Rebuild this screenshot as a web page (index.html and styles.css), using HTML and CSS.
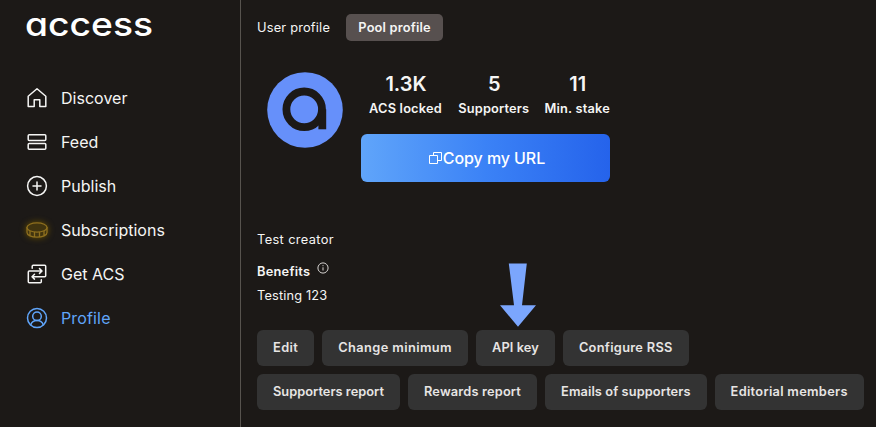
FILE: index.html
```html
<!DOCTYPE html>
<html lang="en">
<head>
<meta charset="utf-8">
<title>access – Profile</title>
<link rel="stylesheet" href="styles.css">
</head>
<body>
<div class="app">
  <aside class="sidebar">
    <svg class="logo" width="130" height="32" viewBox="0 0 130 32"><text x="0" y="25.500" textLength="128" lengthAdjust="spacingAndGlyphs">access</text></svg>
    <nav class="nav">
      <a class="nav-item"><svg class="icon" viewBox="0 0 24 24"><path d="M3.200 20.500V10.200L12 2.700l8.800 7.500v10.300h-6v-6.700H9.200v6.700z"/></svg>Discover</a>
      <a class="nav-item"><svg class="icon" viewBox="0 0 24 24"><rect x="3.200" y="4.700" width="17.600" height="5.800" rx="1"/><rect x="3.200" y="13.500" width="17.600" height="5.800" rx="1"/></svg>Feed</a>
      <a class="nav-item"><svg class="icon" viewBox="0 0 24 24"><circle cx="12" cy="12" r="9.400"/><path d="M12 8v8M8 12h8"/></svg>Publish</a>
      <a class="nav-item"><svg class="icon coin" viewBox="0 0 24 24"><path d="M2 9.500v5c0 2.600 4.500 4.700 10 4.700s10-2.100 10-4.700v-5M9.500 14.300v4.700M14.500 14.300v4.700M5 13.200v4.200M19 13.200v4.200"/><ellipse cx="12" cy="9.500" rx="10" ry="4.600"/></svg>Subscriptions</a>
      <a class="nav-item"><svg class="icon" viewBox="0 0 24 24"><path d="M7.200 6.300v-2c0-.600.400-1 1-1h11.500c.600 0 1 .400 1 1v9.400c0 .600-.400 1-1 1H7.500M16.300 17.700v2c0 .600-.400 1-1 1H4.300c-.600 0-1-.400-1-1V10c0-.600.400-1 1-1h12.500M14.500 6.600L17 9l-2.500 2.400M9.500 12.300L7 14.700l2.500 2.400"/></svg>Get ACS</a>
      <a class="nav-item active"><svg class="icon" viewBox="0 0 24 24"><circle cx="12" cy="12" r="9.500"/><circle cx="12" cy="10.300" r="4.300"/><path d="M5.800 18.800c.800-2.700 3.300-4.200 6.200-4.200s5.400 1.500 6.200 4.200"/></svg>Profile</a>
    </nav>
  </aside>
  <main class="content">
    <div class="tabs"><span class="tab">User profile</span><span class="tab selected">Pool profile</span></div>
    <section class="profile">
      <svg class="avatar" width="76" height="76" viewBox="0 0 76 76"><circle class="disc" cx="38" cy="38" r="37.800"/><circle class="ring" cx="37.200" cy="37.300" r="17.800"/><path class="ring" d="M55.300 37.300V57.300"/></svg>
      <div class="summary">
        <div class="stats">
          <div class="stat"><b>1.3K</b><span>ACS locked</span></div>
          <div class="stat tight"><b>5</b><span>Supporters</span></div>
          <div class="stat"><b>11</b><span>Min. stake</span></div>
        </div>
        <button class="copy"><svg width="14" height="14" viewBox="0 0 14 14"><path d="M.500 4.500h8v8h-8zM4.500 4.500v-3h8v8h-4"/></svg>Copy my URL</button>
      </div>
    </section>
    <p class="bio">Test creator</p>
    <h2 class="benefits">Benefits <svg width="12" height="12" viewBox="0 0 12 12"><circle cx="6" cy="6" r="5.100"/><path d="M6 5.300v3.200M6 3.200v1"/></svg></h2>
    <p class="benefit">Testing 123</p>
    <div class="actions">
      <button class="loose">Edit</button><button class="loose">Change minimum</button>
      <button class="api">API key<svg class="arrow" width="36" height="64" viewBox="0 0 36 64"><path d="M8.800.500h18L22 42.300h14L18 63.800 0 42.300h14z"/></svg></button>
      <button class="rss">Configure RSS</button>
    </div>
    <div class="actions">
      <button class="snug">Supporters report</button><button>Rewards report</button><button class="api">Emails of supporters</button><button class="rss">Editorial members</button>
    </div>
  </main>
</div>
</body>
</html>
```
FILE: styles.css
```css
* { box-sizing: border-box; }
body { margin: 0; background: #1c1917; color: #f5f5f4; font: 12.8px/20px Inter, sans-serif; overflow: hidden; }
.app { display: flex; height: 427px; }
.sidebar { width: 241px; flex: none; border-right: 1px solid #57534e; padding: 10px 25px; }
.logo { display: block; overflow: visible; }
.logo text { font: 500 33px Inter, sans-serif; font-feature-settings: "cv11"; fill: #fff; }
.nav { margin-top: 34px; }
.nav-item { display: flex; align-items: center; gap: 12px; height: 44px; font-size: 16px; letter-spacing: .02px; }
.icon { width: 24px; height: 24px; fill: none; stroke: currentColor; stroke-width: 1.5; stroke-linejoin: round; stroke-linecap: round; overflow: visible; }
.nav-item .coin { color: #8f701f; fill: #41340f; filter: drop-shadow(0 0 3px #6b5200); stroke-width: 1.3; }
.active { color: #60a5fa; letter-spacing: .15px; }
.content { flex: 1; padding: 14px 0 0 16px; }
.tabs { display: flex; gap: 16px; letter-spacing: .2px; }
.tab { line-height: 27px; }
.selected { width: 97px; text-align: center; border-radius: 5px; background: #57504f; font-weight: 600; }
.profile { display: flex; gap: 18px; margin: 31px 0 0 10px; }
.avatar { flex: none; }
.disc { fill: #6690fa; }
.ring { fill: none; stroke: #1c1917; stroke-width: 7.8; }
.summary { width: 249px; }
.stats { display: flex; justify-content: space-between; height: 62px; padding-left: 8px; }
.stat { display: flex; flex-direction: column; align-items: center; font-weight: 600; letter-spacing: .2px; }
.tight { letter-spacing: .15px; padding-left: 1px; }
.stat b { font-size: 20px; font-weight: 600; line-height: 24px; letter-spacing: 0; padding-left: 1px; }
.stat span { line-height: 25px; }
button { border: 0; color: #e7e5e4; font: 600 12.8px/20px Inter, sans-serif; letter-spacing: .17px; }
.copy { display: flex; align-items: center; justify-content: center; gap: 0; width: 100%; height: 48px; padding: 0 0 0 3px; border-radius: 6px; background: linear-gradient(90deg, #60a5fa, #3b82f6 50%, #2563eb); color: #fff; font-size: 16px; font-weight: 500; letter-spacing: -.08px; }
.copy path { fill: none; stroke: currentColor; }
p, h2 { margin: 0; }
.bio { margin-top: 48px; letter-spacing: .38px; }
.benefits { display: flex; gap: 7px; margin-top: 12px; font-size: inherit; font-weight: 600; letter-spacing: .25px; }
.benefits svg { fill: none; stroke: #d6d3d1; }
.benefit { margin-top: 4px; letter-spacing: .15px; }
.actions { display: flex; gap: 8px; margin-top: 8px; }
.benefit + .actions { margin-top: 24px; }
.actions button { height: 36px; padding: 0 16px; border-radius: 6px; background: #333; white-space: nowrap; }
.actions .loose { letter-spacing: .4px; }
.actions .rss { letter-spacing: .3px; }
.actions .snug { letter-spacing: .03px; }
.actions .api { position: relative; letter-spacing: .1px; }
.arrow { position: absolute; left: 24px; top: -67px; fill: #7ba6fd; }
```
